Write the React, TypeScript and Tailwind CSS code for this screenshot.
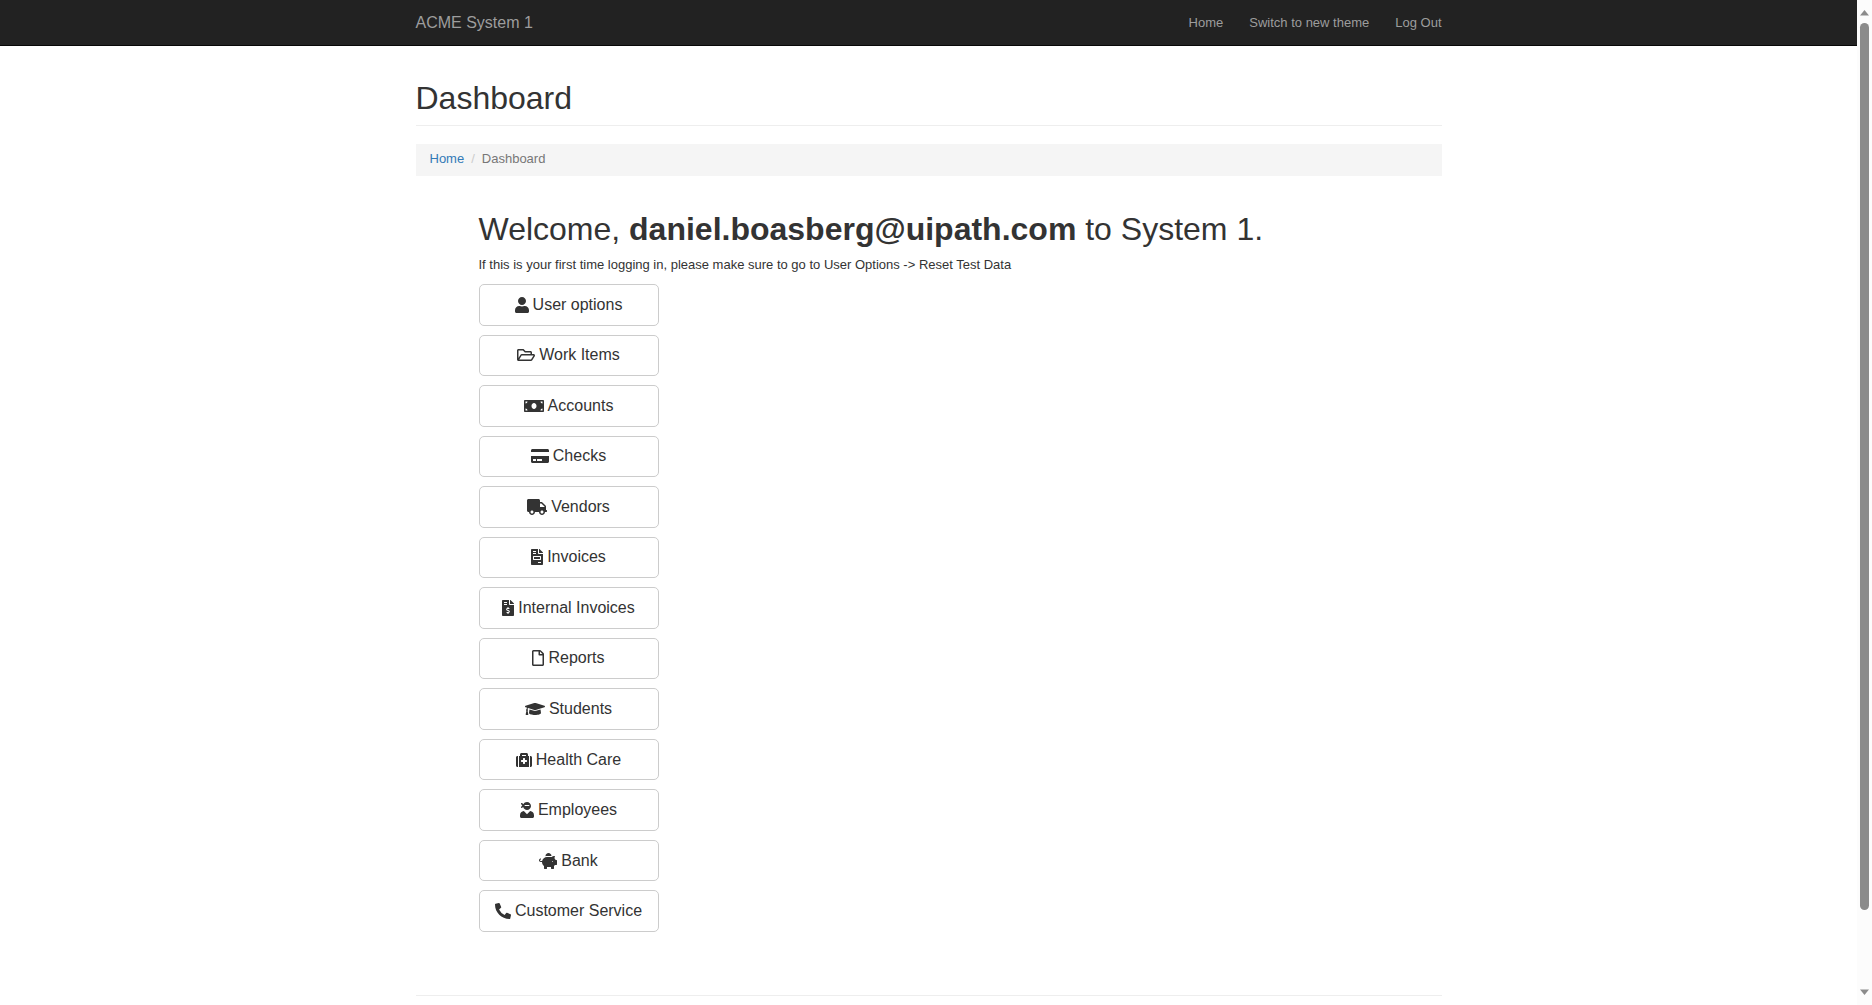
import React from "react";
import type { IconType } from "react-icons";
import {
  FaUser, FaRegFolderOpen, FaMoneyBill, FaCreditCard, FaTruck, FaFileInvoice, FaFileInvoiceDollar,
  FaRegFile, FaGraduationCap, FaMedkit, FaUserNinja, FaPiggyBank, FaPhoneAlt,
} from "react-icons/fa";

const items: { label: string; icon: IconType; width: string }[] = [
  { label: "User options", icon: FaUser, width: "w-[14px]" },
  { label: "Work Items", icon: FaRegFolderOpen, width: "w-[18px]" },
  { label: "Accounts", icon: FaMoneyBill, width: "w-5" },
  { label: "Checks", icon: FaCreditCard, width: "w-[18px]" },
  { label: "Vendors", icon: FaTruck, width: "w-5" },
  { label: "Invoices", icon: FaFileInvoice, width: "w-3" },
  { label: "Internal Invoices", icon: FaFileInvoiceDollar, width: "w-3" },
  { label: "Reports", icon: FaRegFile, width: "w-3" },
  { label: "Students", icon: FaGraduationCap, width: "w-5" },
  { label: "Health Care", icon: FaMedkit, width: "w-4" },
  { label: "Employees", icon: FaUserNinja, width: "w-[14px]" },
  { label: "Bank", icon: FaPiggyBank, width: "w-[18px]" },
  { label: "Customer Service", icon: FaPhoneAlt, width: "w-4" },
];

function Navbar() {
  return (
    <nav className="border-b border-[#080808] bg-[#222222] text-[#9d9d9d]">
      <div className="mx-auto flex h-[45px] max-w-[1026px] items-center justify-between">
        <a href="#" className="text-base">ACME System 1</a>
        <ul className="flex gap-[26px] text-[13px]">
          <li><a href="#">Home</a></li>
          <li><a href="#">Switch to new theme</a></li>
          <li><a href="#">Log Out</a></li>
        </ul>
      </div>
    </nav>
  );
}

function ScrollRail() {
  return (
    <div aria-hidden="true" className="flex w-[15px] shrink-0 flex-col items-center bg-[#fcfcfc] py-[10px]">
      <svg width="9" height="6" viewBox="0 0 9 6" fill="#8b8b8b"><path d="M4.5 0 9 5.5H0z" /></svg>
      <div className="mt-[7px] mb-[79px] w-[9px] flex-1 rounded-full bg-[#8b8b8b]" />
      <svg width="9" height="6" viewBox="0 0 9 6" fill="#8b8b8b"><path d="M0 .5h9L4.500 6z" /></svg>
    </div>
  );
}

export default function App() {
  return (
    <div className="flex h-screen bg-white font-['Liberation_Sans',Arial,sans-serif] text-[13px] text-[#333333]">
      <div className="min-w-0 flex-1 overflow-hidden">
        <Navbar />
        <main className="mx-auto max-w-[1026px]">
          <header className="mt-[34px] border-b border-[#eeeeee] pb-[9px]">
            <h1 className="text-[32px] leading-9">Dashboard</h1>
          </header>
          <nav aria-label="Breadcrumb" className="mt-[18px] bg-[#f5f5f5] px-[14px] pt-[5px] pb-[7px]">
            <ol className="flex leading-5">
              <li><a href="#" className="text-[#337ab7]">Home</a></li>
              <li aria-hidden="true" className="px-[7px] text-[#cccccc]">/</li>
              <li className="text-[#777777]">Dashboard</li>
            </ol>
          </nav>
          <section className="mt-[35px] px-[63px]">
            <h2 className="text-[32px] leading-9">
              Welcome, <strong className="font-bold">daniel.boasberg@uipath.com</strong> to System 1.
            </h2>
            <p className="mt-[9px] leading-[18px]">
              If this is your first time logging in, please make sure to go to User Options -&gt; Reset Test Data
            </p>
            <div className="mt-[10px] grid min-h-[648px] w-[180px] gap-[9px]">
              {items.map(({ label, icon: Icon, width }) => (
                <button
                  key={label}
                  type="button"
                  className="flex items-center justify-center gap-1 rounded-[5px] border border-[#cccccc] text-base"
                >
                  <Icon aria-hidden="true" className={`h-4 shrink-0 ${width}`} />
                  {label}
                </button>
              ))}
            </div>
          </section>
          <hr className="mt-[63px] border-[#eeeeee]" />
        </main>
      </div>
      <ScrollRail />
    </div>
  );
}
